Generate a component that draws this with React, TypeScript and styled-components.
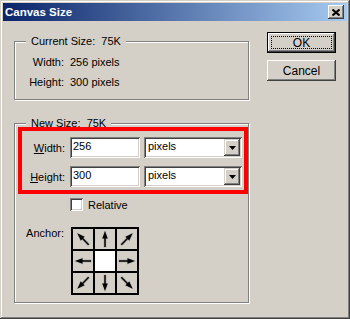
import styled, { createGlobalStyle } from 'styled-components';

const GlobalStyle = createGlobalStyle`
  html, body {
    margin: 0;
    padding: 0;
    background: #d4d0c8;
  }
`;

const Window = styled.div`
  width: 350px;
  height: 319px;
  box-sizing: border-box;
  padding: 3px;
  display: flex;
  flex-direction: column;
  background: #d4d0c8;
  box-shadow: inset -1px -1px #404040, inset 1px 1px #d4d0c8,
    inset -2px -2px #808080, inset 2px 2px #ffffff;
  font-family: "Liberation Sans", Arial, sans-serif;
  font-size: 11px;
  color: #000;
`;

const TitleBar = styled.div`
  height: 18px;
  display: flex;
  align-items: center;
  justify-content: space-between;
  padding: 0 3px 0 2px;
  background: linear-gradient(90deg, #0a246a, #a6caf0);
`;

const Title = styled.span`
  color: #fff;
  font-weight: bold;
  font-size: 11.5px;
`;

const CloseButton = styled.div`
  width: 16px;
  height: 14px;
  display: flex;
  align-items: center;
  justify-content: center;
  background: #d4d0c8;
  box-shadow: inset -1px -1px #404040, inset 1px 1px #ffffff,
    inset -2px -2px #808080, inset 2px 2px #d4d0c8;
`;

const Body = styled.div`
  display: flex;
  gap: 18px;
  padding-left: 11px;
`;

const LeftColumn = styled.div`
  display: flex;
  flex-direction: column;
  padding-top: 14px;
`;

const Group = styled.fieldset<{ $top?: number }>`
  width: 235px;
  box-sizing: border-box;
  margin: ${p => p.$top || 0}px 0 0 0;
  padding: 0;
  min-width: 0;
  border: 1px solid #808080;
  box-shadow: 1px 1px 0 #ffffff, inset 1px 1px 0 #ffffff;
`;

const Legend = styled.legend`
  margin-left: 11px;
  padding: 0 5px;
  line-height: 13px;
  background: #d4d0c8;
  white-space: pre;
`;

const InfoList = styled.div`
  padding: 4px 0 7px;
`;

const InfoRow = styled.div`
  display: flex;
  align-items: center;
  height: 20px;
`;

const InfoLabel = styled.span`
  width: 49px;
  margin-right: 6px;
  text-align: right;
`;

const Highlight = styled.div`
  margin: -3px 0 0 3px;
  padding: 6px 0 3px 0;
  border: 4px solid #ff0000;
  display: flex;
  flex-direction: column;
  gap: 8px;
`;

const FieldRow = styled.div`
  display: flex;
  align-items: center;
  height: 21px;
`;

const FieldLabel = styled.span`
  width: 43px;
  margin-right: 5px;
  text-align: right;
`;

const TextField = styled.div<{ $width: number }>`
  width: ${p => p.$width}px;
  height: 21px;
  box-sizing: border-box;
  padding: 3px 3px 0;
  background: #fff;
  box-shadow: inset 1px 1px #808080, inset -1px -1px #ffffff,
    inset 2px 2px #404040, inset -2px -2px #d4d0c8;
`;

const Select = styled.div`
  width: 98px;
  height: 21px;
  margin-left: 4px;
  box-sizing: border-box;
  padding: 2px;
  display: flex;
  background: #fff;
  box-shadow: inset 1px 1px #808080, inset -1px -1px #ffffff,
    inset 2px 2px #404040, inset -2px -2px #d4d0c8;
`;

const SelectValue = styled.span`
  flex: 1;
  padding: 1px 0 0 2px;
`;

const DropButton = styled.div`
  width: 16px;
  display: flex;
  align-items: center;
  justify-content: center;
  background: #d4d0c8;
  box-shadow: inset -1px -1px #404040, inset 1px 1px #d4d0c8,
    inset -2px -2px #808080, inset 2px 2px #ffffff;
`;

const CheckRow = styled.label`
  display: flex;
  align-items: center;
  gap: 5px;
  margin-top: 4px;
  padding-left: 55px;
  height: 13px;
`;

const CheckBox = styled.span`
  width: 13px;
  height: 13px;
  box-sizing: border-box;
  background: #fff;
  box-shadow: inset 1px 1px #808080, inset -1px -1px #ffffff,
    inset 2px 2px #404040, inset -2px -2px #d4d0c8;
`;

const AnchorRow = styled.div`
  display: flex;
  align-items: flex-start;
  margin-top: 16px;
  padding-bottom: 7px;
`;

const AnchorLabel = styled.span`
  width: 49px;
  margin-right: 7px;
  text-align: right;
  line-height: 13px;
`;

const AnchorGrid = styled.div`
  display: grid;
  grid-template-columns: repeat(3, 20px);
  grid-auto-rows: 20px;
  gap: 2px;
  padding: 2px;
  background: #000;
`;

const AnchorCell = styled.div<{ $selected?: boolean }>`
  background: ${p => (p.$selected ? '#ffffff' : '#d4d0c8')};
  display: flex;
`;

const ButtonColumn = styled.div`
  display: flex;
  flex-direction: column;
  gap: 7px;
  padding-top: 11px;
`;

const Button = styled.div<{ $default?: boolean }>`
  width: 69px;
  height: 21px;
  box-sizing: border-box;
  display: flex;
  padding: ${p => (p.$default ? '3px' : '4px')};
  border: ${p => (p.$default ? '1px solid #000' : 'none')};
  background: #d4d0c8;
  box-shadow: inset -1px -1px #404040, inset 1px 1px #ffffff,
    inset -2px -2px #808080, inset 2px 2px #d4d0c8;
`;

const ButtonText = styled.span<{ $focused?: boolean }>`
  flex: 1;
  display: flex;
  align-items: center;
  justify-content: center;
  border: 1px dotted ${p => (p.$focused ? '#000' : 'transparent')};
  font-size: 12px;
`;

// arrow drawn pointing up, rotated for each anchor cell
const Arrow = ({ angle }: { angle: number }) => (
    <svg width="20" height="20" viewBox="0 0 20 20">
        <g transform={`rotate(${angle} 10 10)`}>
            <line x1="10" y1="8" x2="10" y2="18.5" stroke="#8a8a8a" strokeWidth="3" opacity="0.45" />
            <polygon points="10,1 6.6,10 13.4,10" fill="#8a8a8a" opacity="0.45" />
            <line x1="10" y1="8" x2="10" y2="18" stroke="#000" strokeWidth="1.5" />
            <polygon points="10,2 7.3,9.5 12.7,9.5" fill="#000" />
        </g>
    </svg>
);

const anchors = [315, 0, 45, 270, -1, 90, 225, 180, 135];

const CanvasSizeDialog = () => {
    return (
        <Window>
            <TitleBar>
                <Title>Canvas Size</Title>
                <CloseButton>
                    <svg width="8" height="7" viewBox="0 0 8 7">
                        <path d="M0.5 0.5 L7.5 6.5 M7.5 0.5 L0.5 6.5" stroke="#000" strokeWidth="2" />
                    </svg>
                </CloseButton>
            </TitleBar>

            <Body>
                <LeftColumn>
                    <Group>
                        <Legend>{'Current Size:  75K'}</Legend>
                        <InfoList>
                            <InfoRow>
                                <InfoLabel>Width:</InfoLabel>
                                <span>256 pixels</span>
                            </InfoRow>
                            <InfoRow>
                                <InfoLabel>Height:</InfoLabel>
                                <span>300 pixels</span>
                            </InfoRow>
                        </InfoList>
                    </Group>

                    <Group $top={17}>
                        <Legend>{'New Size:  75K'}</Legend>
                        <Highlight>
                            <FieldRow>
                                <FieldLabel><u>W</u>idth:</FieldLabel>
                                <TextField $width={70}>256</TextField>
                                <Select>
                                    <SelectValue>pixels</SelectValue>
                                    <DropButton>
                                        <svg width="7" height="4" viewBox="0 0 7 4">
                                            <polygon points="0,0 7,0 3.5,4" fill="#000" />
                                        </svg>
                                    </DropButton>
                                </Select>
                            </FieldRow>
                            <FieldRow>
                                <FieldLabel><u>H</u>eight:</FieldLabel>
                                <TextField $width={70}>300</TextField>
                                <Select>
                                    <SelectValue>pixels</SelectValue>
                                    <DropButton>
                                        <svg width="7" height="4" viewBox="0 0 7 4">
                                            <polygon points="0,0 7,0 3.5,4" fill="#000" />
                                        </svg>
                                    </DropButton>
                                </Select>
                            </FieldRow>
                        </Highlight>

                        <CheckRow>
                            <CheckBox />
                            <span>Relative</span>
                        </CheckRow>

                        <AnchorRow>
                            <AnchorLabel>Anchor:</AnchorLabel>
                            <AnchorGrid>
                                {anchors.map((angle, i) => (
                                    <AnchorCell key={i} $selected={angle < 0}>
                                        {angle >= 0 && <Arrow angle={angle} />}
                                    </AnchorCell>
                                ))}
                            </AnchorGrid>
                        </AnchorRow>
                    </Group>
                </LeftColumn>

                <ButtonColumn>
                    <Button $default>
                        <ButtonText $focused>OK</ButtonText>
                    </Button>
                    <Button>
                        <ButtonText>Cancel</ButtonText>
                    </Button>
                </ButtonColumn>
            </Body>
        </Window>
    );
};

export default function App() {
    return (
        <>
            <GlobalStyle />
            <CanvasSizeDialog />
        </>
    );
}
